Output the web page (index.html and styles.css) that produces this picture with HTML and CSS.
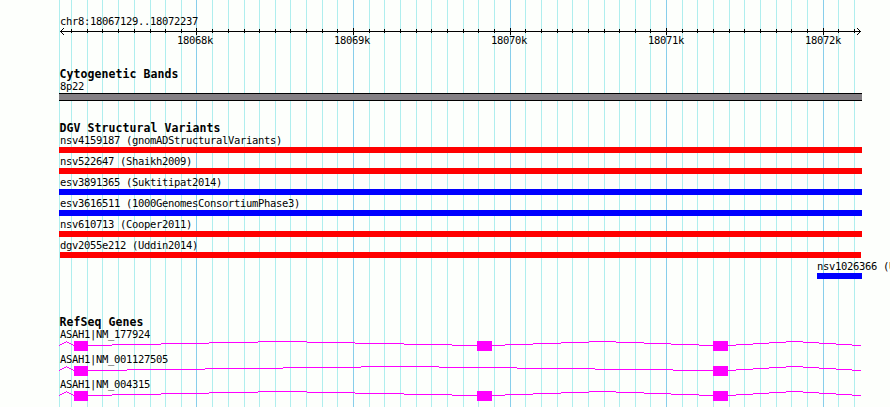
FILE: index.html
```
<!DOCTYPE html>
<html lang="en">
<head>
<meta charset="utf-8">
<title>chr8:18067129..18072237</title>
<link rel="stylesheet" href="styles.css">
</head>
<body>
<main class="browser">
<svg class="grid" width="890" height="407" aria-hidden="true">
<path class="minor" d="M59.5 0v407M71.5 0v407M87.5 0v407M102.5 0v407M118.5 0v407M134.5 0v407M150.5 0v407M165.5 0v407M181.5 0v407M212.5 0v407M228.5 0v407M244.5 0v407M259.5 0v407M275.5 0v407M290.5 0v407M306.5 0v407M322.5 0v407M337.5 0v407M369.5 0v407M384.5 0v407M400.5 0v407M416.5 0v407M431.5 0v407M447.5 0v407M463.5 0v407M478.5 0v407M494.5 0v407M525.5 0v407M541.5 0v407M557.5 0v407M572.5 0v407M588.5 0v407M604.5 0v407M619.5 0v407M635.5 0v407M650.5 0v407M682.5 0v407M697.5 0v407M713.5 0v407M729.5 0v407M744.5 0v407M760.5 0v407M776.5 0v407M791.5 0v407M807.5 0v407M838.5 0v407M854.5 0v407"/>
<path class="major" d="M196.5 0v407M353.5 0v407M510.5 0v407M666.5 0v407M823.5 0v407"/>
</svg>
<section class="ruler">
<div class="label">chr8:18067129..18072237</div>
<svg class="axis" width="803" height="7" viewBox="59 0 803 7">
<path d="M60 3.5H861M61 2.5h1M62 1.5h1M63 .5h1M61 4.5h1M62 5.5h1M63 6.5h1M859 2.5h1M858 1.5h1M857 .5h1M859 4.5h1M858 5.5h1M857 6.5h1"/>
<path d="M71.5 1v4M87.5 1v4M102.5 1v4M118.5 1v4M134.5 1v4M150.5 1v4M165.5 1v4M181.5 1v4M212.5 1v4M228.5 1v4M244.5 1v4M259.5 1v4M275.5 1v4M290.5 1v4M306.5 1v4M322.5 1v4M337.5 1v4M369.5 1v4M384.5 1v4M400.5 1v4M416.5 1v4M431.5 1v4M447.5 1v4M463.5 1v4M478.5 1v4M494.5 1v4M525.5 1v4M541.5 1v4M557.5 1v4M572.5 1v4M588.5 1v4M604.5 1v4M619.5 1v4M635.5 1v4M650.5 1v4M682.5 1v4M697.5 1v4M713.5 1v4M729.5 1v4M744.5 1v4M760.5 1v4M776.5 1v4M791.5 1v4M807.5 1v4M838.5 1v4M854.5 1v4"/>
<path d="M196.5 0v7M353.5 0v7M510.5 0v7M666.5 0v7M823.5 0v7"/>
</svg>
<div class="ticks"><span>18068k</span><span>18069k</span><span>18070k</span><span>18071k</span><span>18072k</span></div>
</section>
<section class="bands">
<h2>Cytogenetic Bands</h2>
<div class="label">8p22</div>
<div class="band"></div>
</section>
<section class="variants">
<h2>DGV Structural Variants</h2>
<div class="variant loss"><div class="label">nsv4159187 (gnomADStructuralVariants)</div><div class="bar"></div></div>
<div class="variant loss"><div class="label">nsv522647 (Shaikh2009)</div><div class="bar"></div></div>
<div class="variant gain"><div class="label">esv3891365 (Suktitipat2014)</div><div class="bar"></div></div>
<div class="variant gain"><div class="label">esv3616511 (1000GenomesConsortiumPhase3)</div><div class="bar"></div></div>
<div class="variant loss"><div class="label">nsv610713 (Cooper2011)</div><div class="bar"></div></div>
<div class="variant loss inset"><div class="label">dgv2055e212 (Uddin2014)</div><div class="bar"></div></div>
<div class="variant gain partial"><div class="label">nsv1026366 (Uddin2014)</div><div class="bar"></div></div>
</section>
<section class="genes">
<h2>RefSeq Genes</h2>
<div class="gene"><div class="label">ASAH1|NM_177924</div>
<svg width="803" height="10" viewBox="59 0 803 10"><path d="M59 4.5h1M60 3.5h2M62 2.5h2M64 1.5h2M66 .5h1M67 1.5h2M69 2.5h2M71 3.5h2M73 4.5h1M88 4.5H112M112 3.5H161M161 2.5H209M209 1.5H258M258 .5H307M307 1.5H355M355 2.5H404M404 3.5H452M452 4.5H505M505 3.5H533M533 2.5H561M561 1.5H589M589 .5H616M616 1.5H644M644 2.5H671M671 3.5H699M699 4.5H736M736 3.5H753M753 2.5H769M769 1.5H786M786 .5H803M803 1.5H819M819 2.5H836M836 3.5H852M852 4.5H861"/><rect x="74" width="14" height="10"/><rect x="477" width="15" height="10"/><rect x="713" width="15" height="10"/></svg></div>
<div class="gene"><div class="label">ASAH1|NM_001127505</div>
<svg width="803" height="10" viewBox="59 0 803 10"><path d="M59 4.5h1M60 3.5h2M62 2.5h2M64 1.5h2M66 .5h1M67 1.5h2M69 2.5h2M71 3.5h2M73 4.5h1M88 4.5H127M127 3.5H205M205 2.5H283M283 1.5H361M361 .5H439M439 1.5H517M517 2.5H595M595 3.5H673M673 4.5H736M736 3.5H753M753 2.5H769M769 1.5H786M786 .5H803M803 1.5H819M819 2.5H836M836 3.5H852M852 4.5H861"/><rect x="74" width="14" height="10"/><rect x="713" width="15" height="10"/></svg></div>
<div class="gene"><div class="label">ASAH1|NM_004315</div>
<svg width="803" height="10" viewBox="59 0 803 10"><path d="M59 4.5h1M60 3.5h2M62 2.5h2M64 1.5h2M66 .5h1M67 1.5h2M69 2.5h2M71 3.5h2M73 4.5h1M88 4.5H112M112 3.5H161M161 2.5H209M209 1.5H258M258 .5H307M307 1.5H355M355 2.5H404M404 3.5H452M452 4.5H505M505 3.5H533M533 2.5H561M561 1.5H589M589 .5H616M616 1.5H644M644 2.5H671M671 3.5H699M699 4.5H736M736 3.5H753M753 2.5H769M769 1.5H786M786 .5H803M803 1.5H819M819 2.5H836M836 3.5H852M852 4.5H861"/><rect x="74" width="14" height="10"/><rect x="477" width="15" height="10"/><rect x="713" width="15" height="10"/></svg></div>
</section>
</main>
</body>
</html>
```
FILE: styles.css
```
* { box-sizing: border-box; }
body { margin: 0; background: #fdfffc; color: #000; }
.browser {
  position: relative;
  width: 890px;
  height: 407px;
  overflow: hidden;
  padding: 15px 0 0 59px;
  font: 10.5px/13px "DejaVu Sans Mono", "Liberation Mono", monospace;
  letter-spacing: -0.321px;
}
.grid { position: absolute; left: 0; top: 0; }
.grid path, .axis path { fill: none; shape-rendering: crispEdges; }
.minor { stroke: #afeeee; }
.major { stroke: #87ceeb; }
section { position: relative; width: 803px; }
svg { display: block; }
h2 {
  margin: 0;
  height: 13px;
  font-size: 11.5px;
  line-height: 13px;
  font-weight: bold;
  letter-spacing: 0.077px;
  padding-left: 0.5px;
}
.label { height: 13px; padding-left: 1px; white-space: nowrap; }
.ruler { height: 53px; }
.axis path { stroke: #000; }
.ticks { display: flex; gap: 121px; padding-left: 118px; line-height: 10px; }
.ticks span { width: 36px; white-space: nowrap; }
.bands { height: 54px; }
.bands .label { height: 12px; line-height: 11px; }
.band { height: 8px; background: #848084; border: solid #000; border-width: 1px 0; }
.variants { height: 194px; }
.variants h2 { height: 12px; }
.variant { height: 21px; }
.bar { height: 6px; }
.loss .bar { background: #f00; }
.gain .bar { background: #00f; }
.inset .bar { margin: 0 1px; }
.partial { padding-left: 758px; }
.partial .label { padding-left: 0; }
.genes h2 { height: 12px; }
.gene { height: 25px; }
.gene svg path { fill: none; stroke: #f0f; shape-rendering: crispEdges; }
.gene rect { fill: #f0f; }
```
